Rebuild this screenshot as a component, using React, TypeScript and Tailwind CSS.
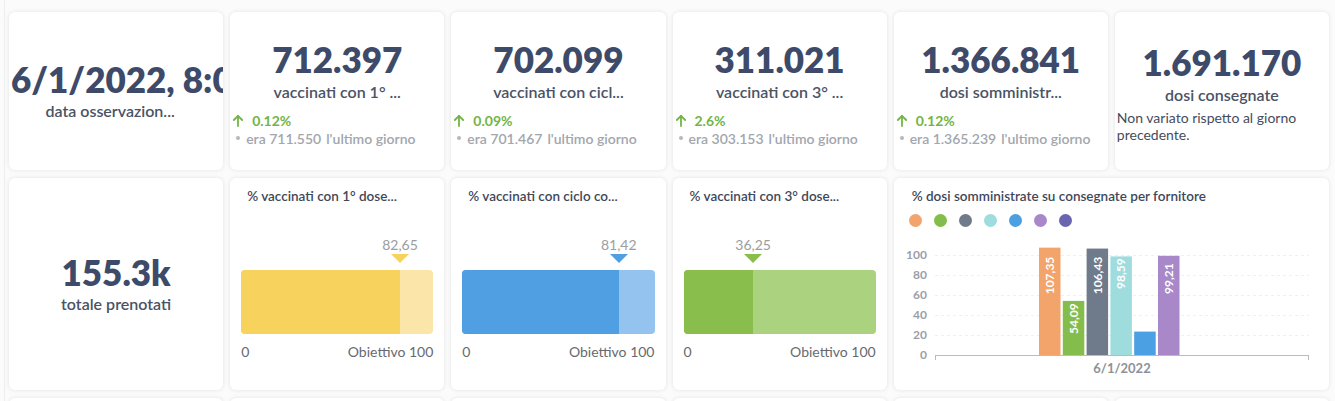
import React from "react";

const card = "rounded-[6px] bg-white shadow-[0_0_4px_rgba(0,0,0,0.10)] overflow-hidden";
const big = "text-[35px] leading-[36px] font-extrabold text-[#3e4a69] whitespace-nowrap";

function ArrowUp() {
  return (
    <svg width="12" height="13" viewBox="0 0 12 13" fill="none" stroke="#72b545" strokeWidth="1.8" strokeLinecap="round" strokeLinejoin="round">
      <path d="M6 12 V1.8" />
      <path d="M1.8 6 L6 1.8 L10.2 6" />
    </svg>
  );
}

function Kpi({ value, label, pct, prev }: { value: string; label: string; pct: string; prev: string }) {
  return (
    <div className={`${card} flex flex-col items-center pt-[29px] px-[2px]`}>
      <div className={big}>{value}</div>
      <div className="mt-[5px] text-[16px] leading-[20px] font-semibold text-[#4a5366] whitespace-nowrap">{label}</div>
      <div className="mt-[9px] self-stretch">
        <div className="flex items-center h-[18px]">
          <ArrowUp />
          <span className="ml-[8px] text-[14px] font-bold text-[#72b545]">{pct}</span>
        </div>
        <div className="flex items-center h-[18px] pl-[4px] text-[14px] font-semibold text-[#a2a6ad] whitespace-nowrap">
          <span className="w-[4px] h-[4px] rounded-full bg-[#b5b8bd]" />
          <span className="ml-[6px]">era {prev}</span>
          <span className="ml-[5px]">l'ultimo giorno</span>
        </div>
      </div>
    </div>
  );
}

function Gauge({ title, value, pct, fill, light }: { title: string; value: string; pct: number; fill: string; light: string }) {
  return (
    <div className={`${card} px-[11px] pt-[10px]`}>
      <div className="pl-[6px] text-[13.5px] leading-[17px] font-semibold text-[#3f4859] whitespace-nowrap">{title}</div>
      <div className="relative mt-[31px] h-[17px]">
        <span
          className="absolute top-0 -translate-x-1/2 text-[14px] leading-[17px] text-[#9b9da1]"
          style={{ left: `${pct}%` }}
        >
          {value}
        </span>
      </div>
      <div className="relative mt-[1px] h-[9px]">
        <span
          className="absolute top-0 -translate-x-1/2 w-0 h-0 border-l-[9px] border-r-[9px] border-t-[9px] border-l-transparent border-r-transparent"
          style={{ left: `${pct}%`, borderTopColor: fill }}
        />
      </div>
      <div className="mt-[7px] h-[64px] rounded-[4px] overflow-hidden flex" style={{ background: light }}>
        <div style={{ width: `${pct}%`, background: fill }} />
      </div>
      <div className="mt-[9px] flex justify-between text-[14px] leading-[17px] text-[#666a70]">
        <span>0</span>
        <span>Obiettivo 100</span>
      </div>
    </div>
  );
}

const bars = [
  { c: "#f2a46b", v: 107.35, label: "107,35", ty: 21.7 },
  { c: "#84bd4b", v: 54.09, label: "54,09", ty: 68.3 },
  { c: "#6f7b8a", v: 106.43, label: "106,43", ty: 21.7 },
  { c: "#9fdcdd", v: 98.59, label: "98,59", ty: 23.3 },
  { c: "#4b9fe3", v: 23.4, label: "", ty: 0 },
  { c: "#a888c8", v: 99.21, label: "99,21", ty: 28.3 },
  { c: "#6a65b1", v: 0, label: "", ty: 0 },
];

function BarChart() {
  const base = 120;
  return (
    <div className={`${card} col-span-2 pt-[10px]`}>
      <div className="pl-[18px] text-[13.5px] leading-[17px] font-semibold text-[#3f4859] whitespace-nowrap">
        % dosi somministrate su consegnate per fornitore
      </div>
      <div className="mt-[9px] pl-[15px] flex gap-[12px]">
        {bars.map((b, i) => (
          <span key={i} className="w-[13px] h-[13px] rounded-full" style={{ background: b.c }} />
        ))}
      </div>
      <svg className="mt-[8px] block" width="435" height="150" fontFamily="Lato, sans-serif">
        {[100, 80, 60, 40, 20].map((v) => (
          <line key={v} x1="41" x2="415" y1={base - v + 0.5} y2={base - v + 0.5} stroke="#f0f0f0" strokeDasharray="3 3" />
        ))}
        {[0, 20, 40, 60, 80, 100].map((v) => (
          <text key={v} x="33" y={base - v + 4} textAnchor="end" fontSize="12" fontWeight="700" fill="#9ba0a8">
            {v}
          </text>
        ))}
        {bars.map((b, i) => {
          const x = 145 + i * 23.8;
          return b.v > 0 ? (
            <rect key={i} x={x} y={base - b.v} width="21.5" height={b.v} fill={b.c} />
          ) : null;
        })}
        {bars.map((b, i) => {
          if (!b.label) return null;
          const cx = 145 + i * 23.8 + 10.75;
          return (
            <text
              key={"t" + i}
              transform={`translate(${cx + 4.3} ${b.ty}) rotate(-90)`}
              textAnchor="end"
              fontSize="12"
              fontWeight="700"
              fill="#ffffff"
            >
              {b.label}
            </text>
          );
        })}
        <line x1="41" x2="415" y1={base + 0.5} y2={base + 0.5} stroke="#b8bcc2" />
        <line x1="41.5" x2="41.5" y1={base} y2={base + 5} stroke="#b8bcc2" />
        <line x1="414.5" x2="414.5" y1={base} y2={base + 5} stroke="#b8bcc2" />
        <text x="228" y="138" textAnchor="middle" fontSize="13" fontWeight="700" fill="#8e9197">
          6/1/2022
        </text>
      </svg>
    </div>
  );
}

export default function App() {
  return (
    <div className="min-h-screen bg-[#fbfbfb] font-['Lato',sans-serif] overflow-hidden">
      <div className="ml-[4px] border-l border-[#ededed] pl-[4px] pr-[6px] pt-[12px]">
        <div className="grid grid-cols-6 grid-rows-[158px_212px_100px] gap-x-[7px] gap-y-[8px]">
          <div className={`${card} flex flex-col justify-center`}>
            <div className={`pl-[2px] overflow-hidden ${big}`}>6/1/2022, 8:00:00</div>
            <div className="mt-[4px] pr-[12px] text-center text-[16px] leading-[20px] font-semibold text-[#4a5366] whitespace-nowrap">
              data osservazion...
            </div>
          </div>
          <Kpi value="712.397" label="vaccinati con 1° ..." pct="0.12%" prev="711.550" />
          <Kpi value="702.099" label="vaccinati con cicl..." pct="0.09%" prev="701.467" />
          <Kpi value="311.021" label="vaccinati con 3° ..." pct="2.6%" prev="303.153" />
          <Kpi value="1.366.841" label="dosi somministr..." pct="0.12%" prev="1.365.239" />
          <div className={`${card} flex flex-col items-center pt-[32px] px-[2px]`}>
            <div className={big}>1.691.170</div>
            <div className="mt-[5px] text-[16px] leading-[20px] font-semibold text-[#4a5366] whitespace-nowrap">dosi consegnate</div>
            <div className="mt-[4px] self-stretch text-[14px] leading-[17px] text-[#454c5c]">
              Non variato rispetto al giorno precedente.
            </div>
          </div>

          <div className={`${card} flex flex-col items-center justify-center`}>
            <div className={big}>155.3k</div>
            <div className="mt-[4px] text-[16px] leading-[20px] font-semibold text-[#4a5366]">totale prenotati</div>
          </div>
          <Gauge title="% vaccinati con 1° dose..." value="82,65" pct={82.65} fill="#f7d35e" light="#fbe5a8" />
          <Gauge title="% vaccinati con ciclo co..." value="81,42" pct={81.42} fill="#4f9fe2" light="#94c3ef" />
          <Gauge title="% vaccinati con 3° dose..." value="36,25" pct={36.25} fill="#89bd4c" light="#abd27e" />
          <BarChart />

          <div className={card} />
          <div className={card} />
          <div className={card} />
          <div className={card} />
          <div className={card} />
          <div className={card} />
        </div>
      </div>
    </div>
  );
}
